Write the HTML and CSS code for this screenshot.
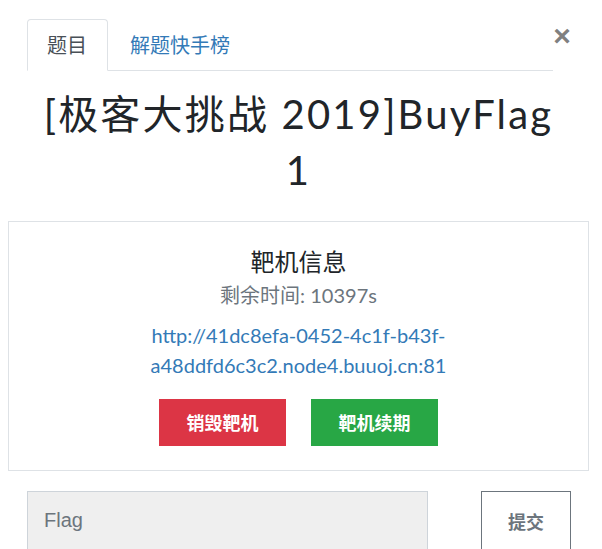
FILE: index.html
```html
<!DOCTYPE html>
<html lang="zh-CN">
<head>
<meta charset="utf-8">
<title>BuyFlag</title>
<link rel="stylesheet" href="styles.css">
</head>
<body>
<div class="dialog">
  <div class="header">
    <ul class="tabs">
      <li class="tab active">题目</li>
      <li class="tab tab-link"><a href="#">解题快手榜</a></li>
    </ul>
    <button class="close" type="button">×</button>
  </div>
  <h1 class="title">[极客大挑战 2019]BuyFlag 1</h1>
  <div class="box">
    <h4 class="box-title">靶机信息</h4>
    <p class="remain">剩余时间: 10397s</p>
    <p class="url"><a href="#">http://41dc8efa-0452-4c1f-b43f-a48ddfd6c3c2.node4.buuoj.cn:81</a></p>
    <div class="actions">
      <button class="btn btn-red" type="button">销毁靶机</button>
      <button class="btn btn-green" type="button">靶机续期</button>
    </div>
  </div>
  <div class="flag-row">
    <input class="flag-input" type="text" placeholder="Flag">
    <button class="submit" type="button">提交</button>
  </div>
</div>
</body>
</html>
```
FILE: styles.css
```css
html, body {
  margin: 0;
  padding: 0;
  background: #fff;
}
body {
  font-family: Lato, "Noto Sans CJK SC", sans-serif;
  font-size: 20px;
  line-height: 1.5;
  color: #212529;
}
.dialog {
  width: 581px;
  margin-left: 8px;
}
.header {
  display: flex;
  padding: 19px 0 0 19px;
}
.tabs {
  display: flex;
  list-style: none;
  margin: 0;
  padding: 0;
  width: 526px;
  border-bottom: 1px solid #dee2e6;
}
.tab {
  padding: 10px 20px 10px 19px;
  margin-bottom: -1px;
  border: 1px solid transparent;
  border-top-left-radius: 4px;
  border-top-right-radius: 4px;
  font-size: 20px;
  line-height: 30px;
}
.tab-link {
  padding-left: 21px;
}
.tab.active {
  color: #495057;
  border-color: #dee2e6 #dee2e6 #fff;
  background: #fff;
}
.tab a {
  color: #337ab7;
  text-decoration: none;
}
.close {
  width: 18px;
  height: 32px;
  padding: 0;
  margin: 1px 0 0 0;
  border: 0;
  background: transparent;
  font-family: "Liberation Sans", sans-serif;
  font-weight: 700;
  font-size: 30px;
  line-height: 32px;
  color: #808080;
}
.title {
  margin: 15px 0 0;
  padding: 0 30px;
  text-align: center;
  font-family: Lato, "Noto Sans CJK SC", sans-serif;
  font-weight: 400;
  font-size: 40px;
  line-height: 56px;
  letter-spacing: 2.2px;
  color: #212529;
}
.box {
  margin-top: 23px;
  border: 1px solid #dee2e6;
  padding: 26px 20px 24px;
  text-align: center;
}
.box-title {
  margin: 0;
  font-size: 24px;
  font-weight: 400;
  line-height: 1.2;
}
.remain {
  margin: 3px 0 0;
  color: #6c757d;
}
.url {
  margin: 10px auto 0;
  width: 300px;
}
.url a {
  color: #337ab7;
  text-decoration: none;
}
.actions {
  display: flex;
  justify-content: center;
  gap: 25px;
  margin-top: 19px;
}
.btn {
  width: 127px;
  height: 47px;
  border: 0;
  border-radius: 0;
  color: #fff;
  font-family: "Noto Sans CJK SC", sans-serif;
  font-weight: 700;
  font-size: 18px;
  line-height: 27px;
}
.btn-red {
  background: #dc3545;
}
.btn-green {
  background: #28a745;
}
.flag-row {
  display: flex;
  align-items: flex-start;
  margin-top: 20px;
  padding-left: 19px;
}
.flag-input {
  box-sizing: border-box;
  width: 401px;
  height: 60px;
  margin: 0;
  padding: 0 16px;
  border: 1px solid #ced4da;
  background: #efefef;
  font-family: "Liberation Sans", sans-serif;
  font-size: 20px;
  color: #495057;
}
.flag-input::placeholder {
  color: #6c757d;
}
.submit {
  box-sizing: border-box;
  width: 90px;
  height: 60px;
  margin-left: 53px;
  border: 1px solid #6c757d;
  border-radius: 0;
  background: #fff;
  color: #6c757d;
  font-family: "Noto Sans CJK SC", sans-serif;
  font-weight: 700;
  font-size: 18px;
}
```
